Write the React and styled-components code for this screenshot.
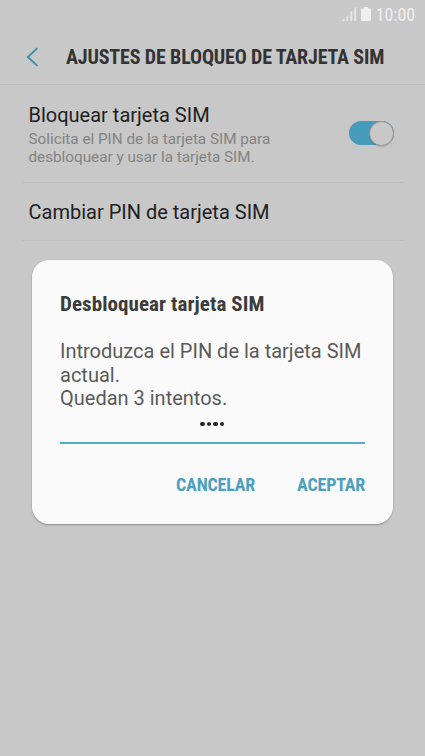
import React from 'react';
import styled, { createGlobalStyle } from 'styled-components';

const GlobalStyle = createGlobalStyle`
* {
  box-sizing: border-box;
}
body {
  margin: 0;
  background: #c8c8c8;
}
`;

const Screen = styled.div`
position: relative;
width: 425px;
height: 756px;
overflow: hidden;
background: #c8c8c8;
font-family: Roboto, "Liberation Sans", sans-serif;
color: #212121;
`;
const StatusBar = styled.div`
display: flex;
justify-content: flex-end;
align-items: center;
gap: 5px;
height: 28px;
padding-right: 10px;
color: #f0f0f0;
`;
const Clock = styled.span`
font-family: "Roboto Condensed", Roboto, sans-serif;
font-stretch: condensed;
font-size: 18px;
line-height: 28px;
letter-spacing: -0.1px;
padding-top: 1px;
`;
const Header = styled.header`
display: flex;
align-items: center;
height: 57px;
padding: 1px 0 0 25px;
border-bottom: 1px solid #bfbfbf;
`;
const Title = styled.h1`
margin: 0 0 0 26px;
font-family: "Roboto Condensed", Roboto, sans-serif;
font-stretch: condensed;
font-size: 20px;
font-weight: 700;
line-height: 24px;
letter-spacing: -0.15px;
color: #333;
white-space: nowrap;
`;
const List = styled.main`
padding: 0 21px 0 22px;
`;
const Row = styled.div`
display: flex;
justify-content: space-between;
align-items: center;
height: ${(props) => props.$height}px;
padding: 0 10.5px 0 6.5px;
border-bottom: 1px solid #bfbfbf;
`;
const Label = styled.div`
font-size: 20px;
line-height: 24px;
color: #212121;
white-space: nowrap;
`;
const Hint = styled.div`
margin-top: 3px;
margin-bottom: -1px;
font-size: 15.25px;
line-height: 18px;
color: #838383;
white-space: nowrap;
`;
const Toggle = styled.div`
display: flex;
justify-content: flex-end;
align-items: center;
width: 44.5px;
height: 24px;
margin-bottom: 1px;
border-radius: 12px;
background: #469bb9;
`;
const Knob = styled.div`
width: 25px;
height: 25px;
flex-shrink: 0;
border: 1px solid #969696;
border-radius: 50%;
background: #c8c8c8;
box-shadow: 0 1px 1px rgba(0, 0, 0, 0.15);
`;
const Dialog = styled.section`
position: absolute;
left: 32px;
top: 260px;
width: 361px;
height: 264px;
padding: 32px 28px 0;
border-radius: 17px;
background: #fafafa;
box-shadow: 0 1px 2px rgba(0, 0, 0, 0.3);
`;
const DialogTitle = styled.h2`
margin: 0 0 23.4px;
font-family: "Roboto Condensed", Roboto, sans-serif;
font-stretch: condensed;
font-size: 21px;
font-weight: 700;
line-height: 24px;
letter-spacing: 0.08px;
color: #3c3c3c;
white-space: nowrap;
`;
const Message = styled.p`
margin: 0;
padding-top: 0.6px;
font-size: 20px;
line-height: 23.6px;
color: #5a5a5a;
white-space: nowrap;
`;
const PinField = styled.div`
display: flex;
justify-content: center;
gap: 2px;
height: 33.2px;
padding: 10.8px 1px 0 0;
border-bottom: 2px solid #52adcc;
`;
const Dot = styled.i`
width: 4.5px;
height: 4.5px;
border-radius: 50%;
background: #252525;
`;
const Actions = styled.div`
display: flex;
justify-content: flex-end;
gap: 42px;
margin-top: 29px;
`;
const Action = styled.button`
padding: 0;
border: 0;
background: none;
font-family: "Roboto Condensed", Roboto, sans-serif;
font-stretch: condensed;
font-size: 18px;
font-weight: 700;
line-height: 24px;
letter-spacing: -0.2px;
color: #4aa0c0;
cursor: pointer;
`;

const Signal = () => (
    <svg width="14" height="14" viewBox="0 0 14 14" fill="#e9e9e9">
        <path d="M0 13.5 2.5 11v3H0zM4.5 9.5l1.7-1.2V14H4.5zM8.5 5.2l1.7-1.5V14H8.5zM12.2 1.5 14 0v14h-1.8z" />
    </svg>
);

const Battery = () => (
    <svg width="10" height="14" viewBox="0 0 10 14" fill="#f0f0f0">
        <path d="M3 0h4v1.5h2q1 0 1 1V13q0 1-1 1H1q-1 0-1-1V2.5q0-1 1-1h2z" />
    </svg>
);

const App = () => <>
    <GlobalStyle />
    <Screen>
        <StatusBar>
            <Signal />
            <Battery />
            <Clock>10:00</Clock>
        </StatusBar>
        <Header>
            <svg width="15" height="20" viewBox="0 0 15 20" fill="none" stroke="#3f8ca8" strokeWidth="1.8">
                <path d="M12.4 1.2 2.8 10l9.6 8.8" />
            </svg>
            <Title>AJUSTES DE BLOQUEO DE TARJETA SIM</Title>
        </Header>
        <List>
            <Row $height={98}>
                <div>
                    <Label>Bloquear tarjeta SIM</Label>
                    <Hint>
                        Solicita el PIN de la tarjeta SIM para<br />
                        desbloquear y usar la tarjeta SIM.
                    </Hint>
                </div>
                <Toggle><Knob /></Toggle>
            </Row>
            <Row $height={58}>
                <Label>Cambiar PIN de tarjeta SIM</Label>
            </Row>
        </List>
        <Dialog>
            <DialogTitle>Desbloquear tarjeta SIM</DialogTitle>
            <Message>
                Introduzca el PIN de la tarjeta SIM<br />
                actual.<br />
                Quedan 3 intentos.
            </Message>
            <PinField>
                <Dot /><Dot /><Dot /><Dot />
            </PinField>
            <Actions>
                <Action>CANCELAR</Action>
                <Action>ACEPTAR</Action>
            </Actions>
        </Dialog>
    </Screen>
</>;

export default App;
